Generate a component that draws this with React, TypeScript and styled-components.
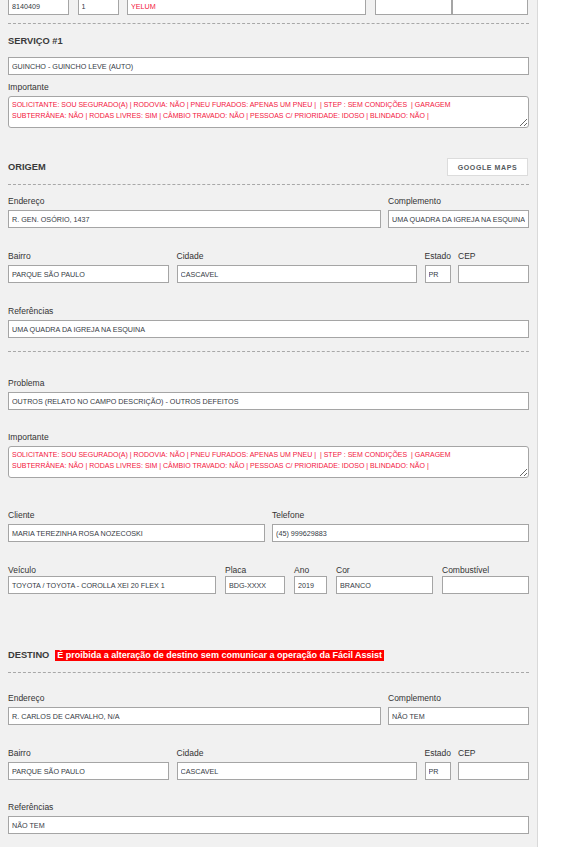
import styled, { createGlobalStyle } from 'styled-components';

const GlobalStyle = createGlobalStyle`
  html, body {
    margin: 0;
    padding: 0;
    background: #ffffff;
  }
  body {
    font-family: "Liberation Sans", Arial, sans-serif;
    color: #333;
  }
`;

const IMPORTANTE =
  'SOLICITANTE: SOU SEGURADO(A) | RODOVIA: NÃO | PNEU FURADOS: APENAS UM PNEU |  | STEP : SEM CONDIÇÕES  | GARAGEM SUBTERRÂNEA: NÃO | RODAS LIVRES: SIM | CÂMBIO TRAVADO: NÃO | PESSOAS C/ PRIORIDADE: IDOSO | BLINDADO: NÃO |';

const App = () => {
  return (
    <>
      <GlobalStyle />
      <Page>
        <Panel>
          <Row $cols="61px 41px 239px 77px 76px" $gap="8.5px" $mt={-3}>
            <Input readOnly defaultValue="8140409" />
            <Input readOnly defaultValue="1" />
            <Input readOnly defaultValue="YELUM" $alert />
            <Input readOnly defaultValue="" />
            <Input readOnly defaultValue="" $joined />
          </Row>

          <Divider $mt={8} />

          <SectionHeader $mt={10}>
            <Title>SERVIÇO #1</Title>
          </SectionHeader>
          <Row $cols="1fr" $mt={9}>
            <Input readOnly defaultValue="GUINCHO - GUINCHO LEVE (AUTO)" />
          </Row>
          <Row $cols="1fr" $mt={6}>
            <Field>
              <Label>Importante</Label>
              <Notes readOnly defaultValue={IMPORTANTE} />
            </Field>
          </Row>

          <SectionHeader $mt={30}>
            <Title>ORIGEM</Title>
            <MapsButton type="button">GOOGLE MAPS</MapsButton>
          </SectionHeader>
          <Divider $mt={8} />

          <Row $cols="1fr 141px" $gap="7px" $mt={10}>
            <Field>
              <Label>Endereço</Label>
              <Input readOnly defaultValue="R. GEN. OSÓRIO, 1437" />
            </Field>
            <Field>
              <Label>Complemento</Label>
              <Input readOnly defaultValue="UMA QUADRA DA IGREJA NA ESQUINA" />
            </Field>
          </Row>
          <Row $cols="161px 1fr 26px 71px" $gap="7.5px" $mt={22}>
            <Field>
              <Label>Bairro</Label>
              <Input readOnly defaultValue="PARQUE SÃO PAULO" />
            </Field>
            <Field>
              <Label>Cidade</Label>
              <Input readOnly defaultValue="CASCAVEL" />
            </Field>
            <Field>
              <Label>Estado</Label>
              <Input readOnly defaultValue="PR" />
            </Field>
            <Field>
              <Label>CEP</Label>
              <Input readOnly defaultValue="" />
            </Field>
          </Row>
          <Row $cols="1fr" $mt={22}>
            <Field>
              <Label>Referências</Label>
              <Input readOnly defaultValue="UMA QUADRA DA IGREJA NA ESQUINA" />
            </Field>
          </Row>

          <Divider $mt={13} />

          <Row $cols="1fr" $mt={25}>
            <Field>
              <Label>Problema</Label>
              <Input readOnly defaultValue="OUTROS (RELATO NO CAMPO DESCRIÇÃO) - OUTROS DEFEITOS" />
            </Field>
          </Row>
          <Row $cols="1fr" $mt={21}>
            <Field>
              <Label>Importante</Label>
              <Notes readOnly defaultValue={IMPORTANTE} />
            </Field>
          </Row>

          <Row $cols="1fr 1fr" $gap="7px" $mt={31}>
            <Field>
              <Label>Cliente</Label>
              <Input readOnly defaultValue="MARIA TEREZINHA ROSA NOZECOSKI" />
            </Field>
            <Field>
              <Label>Telefone</Label>
              <Input readOnly defaultValue="(45) 999629883" />
            </Field>
          </Row>
          <Row $cols="208px 60px 33px 97px 1fr" $gap="9px" $mt={22}>
            <Field>
              <Label $tight>Veículo</Label>
              <Input readOnly defaultValue="TOYOTA / TOYOTA - COROLLA XEI 20 FLEX 1" />
            </Field>
            <Field>
              <Label $tight>Placa</Label>
              <Input readOnly defaultValue="BDG-XXXX" />
            </Field>
            <Field>
              <Label $tight>Ano</Label>
              <Input readOnly defaultValue="2019" />
            </Field>
            <Field>
              <Label $tight>Cor</Label>
              <Input readOnly defaultValue="BRANCO" />
            </Field>
            <Field>
              <Label $tight>Combustível</Label>
              <Input readOnly defaultValue="" />
            </Field>
          </Row>

          <SectionHeader $mt={54}>
            <TitleGroup>
              <Title>DESTINO</Title>
              <Warning>É proibida a alteração de destino sem comunicar a operação da Fácil Assist</Warning>
            </TitleGroup>
          </SectionHeader>
          <Divider $mt={10} />

          <Row $cols="1fr 141px" $gap="7px" $mt={19}>
            <Field>
              <Label>Endereço</Label>
              <Input readOnly defaultValue="R. CARLOS DE CARVALHO, N/A" />
            </Field>
            <Field>
              <Label>Complemento</Label>
              <Input readOnly defaultValue="NÃO TEM" />
            </Field>
          </Row>
          <Row $cols="161px 1fr 26px 71px" $gap="7.5px" $mt={22}>
            <Field>
              <Label>Bairro</Label>
              <Input readOnly defaultValue="PARQUE SÃO PAULO" />
            </Field>
            <Field>
              <Label>Cidade</Label>
              <Input readOnly defaultValue="CASCAVEL" />
            </Field>
            <Field>
              <Label>Estado</Label>
              <Input readOnly defaultValue="PR" />
            </Field>
            <Field>
              <Label>CEP</Label>
              <Input readOnly defaultValue="" />
            </Field>
          </Row>
          <Row $cols="1fr" $mt={21}>
            <Field>
              <Label>Referências</Label>
              <Input readOnly defaultValue="NÃO TEM" />
            </Field>
          </Row>
        </Panel>
      </Page>
    </>
  );
};

const Page = styled.div`
  display: flex;
  min-height: 100vh;
  background: #ffffff;
`;

const Panel = styled.div`
  width: 538px;
  box-sizing: border-box;
  padding: 0 8px 20px 8px;
  background: #f1f1f1;
  border-right: 1px solid #d9d9d9;
  display: flex;
  flex-direction: column;
`;

const Row = styled.div<{ $cols: string; $gap?: string; $mt?: number }>`
  display: grid;
  grid-template-columns: ${({ $cols }) => $cols};
  column-gap: ${({ $gap }) => $gap || '8px'};
  margin-top: ${({ $mt }) => $mt || 0}px;
`;

const Field = styled.div`
  display: flex;
  flex-direction: column;
  min-width: 0;
`;

const Label = styled.label<{ $tight?: boolean }>`
  display: block;
  font-size: 8.5px;
  line-height: 12px;
  color: #333;
  margin-bottom: ${({ $tight }) => ($tight ? 0 : 3)}px;
  white-space: nowrap;
`;

const Input = styled.input<{ $alert?: boolean; $joined?: boolean }>`
  box-sizing: border-box;
  width: 100%;
  height: 18px;
  margin: 0;
  margin-left: ${({ $joined }) => ($joined ? '-8.5px' : '0')};
  padding: 0 3px;
  border: 1px solid #a5a5a5;
  border-radius: 0;
  background: #ffffff;
  font-family: "Liberation Sans", Arial, sans-serif;
  font-size: 7.2px;
  color: ${({ $alert }) => ($alert ? '#f31640' : '#353a44')};
  outline: none;
`;

const Notes = styled.textarea`
  box-sizing: border-box;
  width: 100%;
  height: 32px;
  margin: 0;
  padding: 3px 42px 3px 3px;
  border: 1px solid #a5a5a5;
  border-radius: 3px;
  background: #ffffff;
  font-family: "Liberation Sans", Arial, sans-serif;
  font-size: 7px;
  line-height: 10.5px;
  color: #f31640;
  resize: vertical;
  overflow: hidden;
  outline: none;
  display: block;
`;

const Divider = styled.hr<{ $mt?: number }>`
  margin: ${({ $mt }) => $mt || 0}px 0 0 0;
  border: 0;
  border-top: 1px dashed #a8a8a8;
  height: 0;
`;

const SectionHeader = styled.div<{ $mt?: number }>`
  display: flex;
  align-items: center;
  justify-content: space-between;
  margin-top: ${({ $mt }) => $mt || 0}px;
  min-height: 14px;
`;

const TitleGroup = styled.div`
  display: flex;
  align-items: center;
  gap: 6px;
`;

const Title = styled.h3`
  margin: 0;
  font-size: 9.3px;
  line-height: 14px;
  font-weight: 700;
  color: #3a3a3a;
`;

const Warning = styled.span`
  background: #ff0000;
  color: #ffffff;
  font-size: 9px;
  font-weight: 700;
  line-height: 11px;
  padding: 0 2px;
  white-space: nowrap;
`;

const MapsButton = styled.button`
  box-sizing: border-box;
  width: 81px;
  height: 18px;
  margin: 0 1px 0 0;
  padding: 0;
  border: 1px solid #dcdcdc;
  background: #ffffff;
  color: #555a60;
  font-family: "Liberation Sans", Arial, sans-serif;
  font-size: 7px;
  font-weight: 700;
  letter-spacing: 0.6px;
  cursor: pointer;
`;

export default App;
